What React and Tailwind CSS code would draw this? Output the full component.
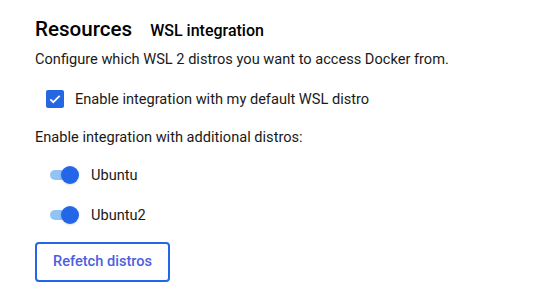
function Toggle() {
    return (
        <div className="relative w-[30px] h-[18px] flex items-center">
            <div className="w-[26px] h-[10px] rounded-full bg-[#90c4f4]" />
            <div className="absolute left-[11px] top-0 w-[18px] h-[18px] rounded-full bg-[#2367e8] shadow-sm" />
        </div>
    );
}

export default function App() {
    return (
        <div className="w-[544px] h-[302px] bg-white text-black font-['Roboto',sans-serif] pl-[35px] pt-[16px]">
            {/* Header */}
            <div className="flex items-baseline gap-[18px] h-[26px]">
                <h1 className="text-[20.6px] font-medium leading-[26px]">Resources</h1>
                <h2 className="text-[16px] font-medium leading-[26px]">WSL integration</h2>
            </div>

            <p className="mt-[7px] text-[14.6px] leading-[20px] text-[#1a1a1a]">
                Configure which WSL 2 distros you want to access Docker from.
            </p>

            {/* Default distro checkbox */}
            <label className="mt-[20px] ml-[11px] flex items-center gap-[11px] h-[20px]">
                <span className="w-[18px] h-[18px] rounded-[2px] bg-[#2566e2] flex items-center justify-center">
                    <svg width="14" height="14" viewBox="0 0 24 24" fill="none">
                        <path d="M4 12.5l5 5L20 6.5" stroke="white" strokeWidth="3" />
                    </svg>
                </span>
                <span className="text-[14.6px] leading-[20px] text-[#1a1a1a]">
                    Enable integration with my default WSL distro
                </span>
            </label>

            <p className="mt-[18px] text-[14.6px] leading-[20px] text-[#1a1a1a]">
                Enable integration with additional distros:
            </p>

            {/* Distros */}
            <div className="mt-[19px] ml-[15px] flex flex-col gap-[22px]">
                {["Ubuntu", "Ubuntu2"].map((d) => (
                    <div key={d} className="flex items-center gap-[11px] h-[18px]">
                        <Toggle />
                        <span className="text-[14.6px] leading-[20px] text-[#1a1a1a]">{d}</span>
                    </div>
                ))}
            </div>

            <button className="mt-[18px] w-[135px] h-[40px] border-2 border-[#2367e8] rounded-[4px] text-[14.6px] font-medium text-[#4c5fe0]">
                Refetch distros
            </button>
        </div>
    );
}
